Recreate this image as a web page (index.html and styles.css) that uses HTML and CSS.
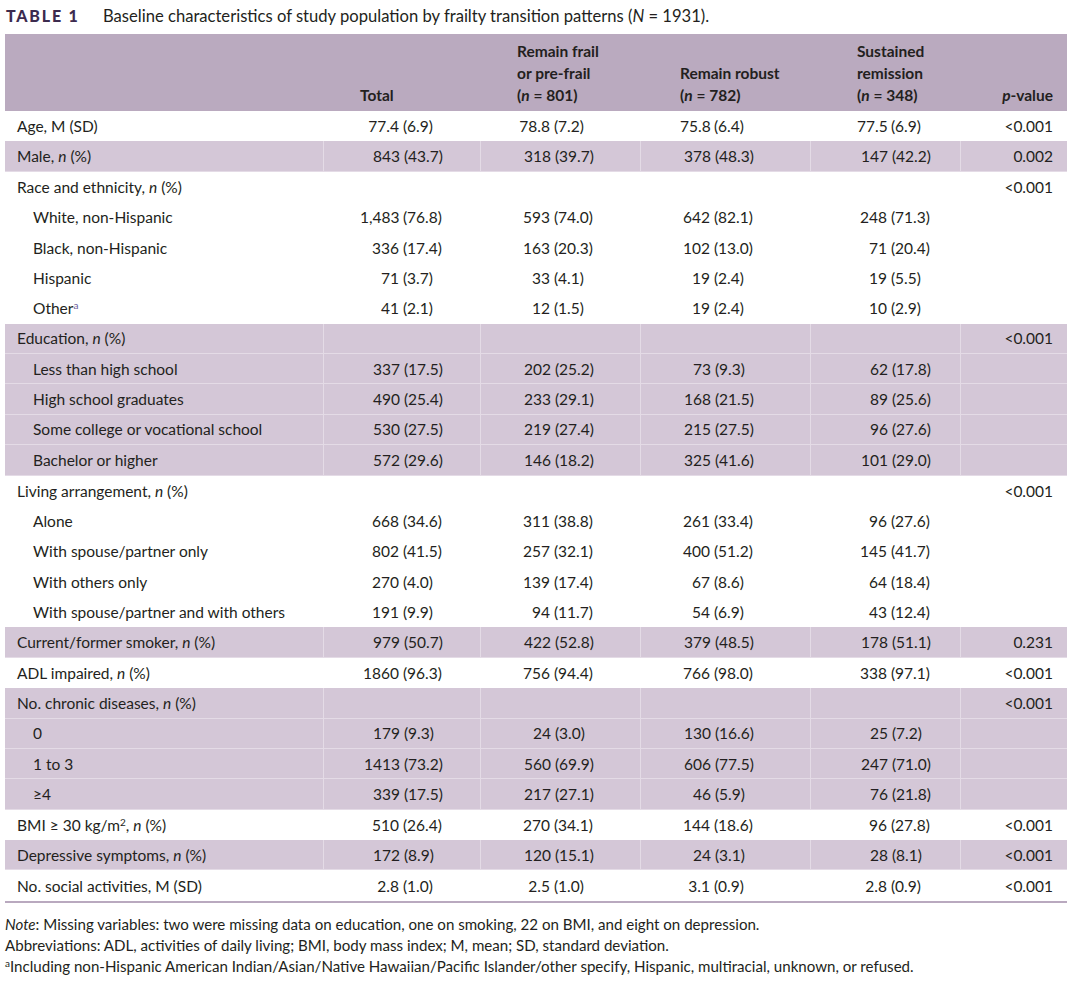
FILE: index.html
```html
<!DOCTYPE html>
<html lang="en">
<head>
<meta charset="utf-8">
<title>Table 1</title>
<link rel="stylesheet" href="styles.css">
</head>
<body>
<div class="wrap">
  <div class="caption"><span class="tlabel">TABLE 1</span><span class="ttext">Baseline characteristics of study population by frailty transition patterns (<i>N</i> = 1931).</span></div>
  <table class="tbl">
    <colgroup>
      <col class="w-label"><col class="w-total"><col class="w-frail"><col class="w-robust"><col class="w-sust"><col class="w-p">
    </colgroup>
    <thead>
      <tr>
        <th class="label"></th>
        <th class="c1">Total</th>
        <th class="c2">Remain frail<br>or pre-frail<br>(<i>n</i> = 801)</th>
        <th class="c3">Remain robust<br>(<i>n</i> = 782)</th>
        <th class="c4">Sustained<br>remission<br>(<i>n</i> = 348)</th>
        <th class="pv"><i>p</i>-value</th>
      </tr>
    </thead>
    <tbody>
      <tr><td class="label">Age, M (SD)</td><td class="c1"><span class="n">77.4</span> (6.9)</td><td class="c2"><span class="n">78.8</span> (7.2)</td><td class="c3"><span class="n">75.8</span> (6.4)</td><td class="c4"><span class="n">77.5</span> (6.9)</td><td class="pv">&lt;0.001</td></tr>
      <tr class="shade"><td class="label">Male, <i>n</i> (%)</td><td class="c1"><span class="n">843</span> (43.7)</td><td class="c2"><span class="n">318</span> (39.7)</td><td class="c3"><span class="n">378</span> (48.3)</td><td class="c4"><span class="n">147</span> (42.2)</td><td class="pv">0.002</td></tr>
      <tr><td class="label">Race and ethnicity, <i>n</i> (%)</td><td class="c1"></td><td class="c2"></td><td class="c3"></td><td class="c4"></td><td class="pv">&lt;0.001</td></tr>
      <tr><td class="label sub">White, non-Hispanic</td><td class="c1"><span class="n">1,483</span> (76.8)</td><td class="c2"><span class="n">593</span> (74.0)</td><td class="c3"><span class="n">642</span> (82.1)</td><td class="c4"><span class="n">248</span> (71.3)</td><td class="pv"></td></tr>
      <tr><td class="label sub">Black, non-Hispanic</td><td class="c1"><span class="n">336</span> (17.4)</td><td class="c2"><span class="n">163</span> (20.3)</td><td class="c3"><span class="n">102</span> (13.0)</td><td class="c4"><span class="n">71</span> (20.4)</td><td class="pv"></td></tr>
      <tr><td class="label sub">Hispanic</td><td class="c1"><span class="n">71</span> (3.7)</td><td class="c2"><span class="n">33</span> (4.1)</td><td class="c3"><span class="n">19</span> (2.4)</td><td class="c4"><span class="n">19</span> (5.5)</td><td class="pv"></td></tr>
      <tr><td class="label sub">Other<sup class="fn">a</sup></td><td class="c1"><span class="n">41</span> (2.1)</td><td class="c2"><span class="n">12</span> (1.5)</td><td class="c3"><span class="n">19</span> (2.4)</td><td class="c4"><span class="n">10</span> (2.9)</td><td class="pv"></td></tr>
      <tr class="shade"><td class="label">Education, <i>n</i> (%)</td><td class="c1"></td><td class="c2"></td><td class="c3"></td><td class="c4"></td><td class="pv">&lt;0.001</td></tr>
      <tr class="shade"><td class="label sub">Less than high school</td><td class="c1"><span class="n">337</span> (17.5)</td><td class="c2"><span class="n">202</span> (25.2)</td><td class="c3"><span class="n">73</span> (9.3)</td><td class="c4"><span class="n">62</span> (17.8)</td><td class="pv"></td></tr>
      <tr class="shade"><td class="label sub">High school graduates</td><td class="c1"><span class="n">490</span> (25.4)</td><td class="c2"><span class="n">233</span> (29.1)</td><td class="c3"><span class="n">168</span> (21.5)</td><td class="c4"><span class="n">89</span> (25.6)</td><td class="pv"></td></tr>
      <tr class="shade"><td class="label sub">Some college or vocational school</td><td class="c1"><span class="n">530</span> (27.5)</td><td class="c2"><span class="n">219</span> (27.4)</td><td class="c3"><span class="n">215</span> (27.5)</td><td class="c4"><span class="n">96</span> (27.6)</td><td class="pv"></td></tr>
      <tr class="shade"><td class="label sub">Bachelor or higher</td><td class="c1"><span class="n">572</span> (29.6)</td><td class="c2"><span class="n">146</span> (18.2)</td><td class="c3"><span class="n">325</span> (41.6)</td><td class="c4"><span class="n">101</span> (29.0)</td><td class="pv"></td></tr>
      <tr><td class="label">Living arrangement, <i>n</i> (%)</td><td class="c1"></td><td class="c2"></td><td class="c3"></td><td class="c4"></td><td class="pv">&lt;0.001</td></tr>
      <tr><td class="label sub">Alone</td><td class="c1"><span class="n">668</span> (34.6)</td><td class="c2"><span class="n">311</span> (38.8)</td><td class="c3"><span class="n">261</span> (33.4)</td><td class="c4"><span class="n">96</span> (27.6)</td><td class="pv"></td></tr>
      <tr><td class="label sub">With spouse/partner only</td><td class="c1"><span class="n">802</span> (41.5)</td><td class="c2"><span class="n">257</span> (32.1)</td><td class="c3"><span class="n">400</span> (51.2)</td><td class="c4"><span class="n">145</span> (41.7)</td><td class="pv"></td></tr>
      <tr><td class="label sub">With others only</td><td class="c1"><span class="n">270</span> (4.0)</td><td class="c2"><span class="n">139</span> (17.4)</td><td class="c3"><span class="n">67</span> (8.6)</td><td class="c4"><span class="n">64</span> (18.4)</td><td class="pv"></td></tr>
      <tr><td class="label sub">With spouse/partner and with others</td><td class="c1"><span class="n">191</span> (9.9)</td><td class="c2"><span class="n">94</span> (11.7)</td><td class="c3"><span class="n">54</span> (6.9)</td><td class="c4"><span class="n">43</span> (12.4)</td><td class="pv"></td></tr>
      <tr class="shade"><td class="label">Current/former smoker, <i>n</i> (%)</td><td class="c1"><span class="n">979</span> (50.7)</td><td class="c2"><span class="n">422</span> (52.8)</td><td class="c3"><span class="n">379</span> (48.5)</td><td class="c4"><span class="n">178</span> (51.1)</td><td class="pv">0.231</td></tr>
      <tr><td class="label">ADL impaired, <i>n</i> (%)</td><td class="c1"><span class="n">1860</span> (96.3)</td><td class="c2"><span class="n">756</span> (94.4)</td><td class="c3"><span class="n">766</span> (98.0)</td><td class="c4"><span class="n">338</span> (97.1)</td><td class="pv">&lt;0.001</td></tr>
      <tr class="shade"><td class="label">No. chronic diseases, <i>n</i> (%)</td><td class="c1"></td><td class="c2"></td><td class="c3"></td><td class="c4"></td><td class="pv">&lt;0.001</td></tr>
      <tr class="shade"><td class="label sub">0</td><td class="c1"><span class="n">179</span> (9.3)</td><td class="c2"><span class="n">24</span> (3.0)</td><td class="c3"><span class="n">130</span> (16.6)</td><td class="c4"><span class="n">25</span> (7.2)</td><td class="pv"></td></tr>
      <tr class="shade"><td class="label sub">1 to 3</td><td class="c1"><span class="n">1413</span> (73.2)</td><td class="c2"><span class="n">560</span> (69.9)</td><td class="c3"><span class="n">606</span> (77.5)</td><td class="c4"><span class="n">247</span> (71.0)</td><td class="pv"></td></tr>
      <tr class="shade"><td class="label sub">≥4</td><td class="c1"><span class="n">339</span> (17.5)</td><td class="c2"><span class="n">217</span> (27.1)</td><td class="c3"><span class="n">46</span> (5.9)</td><td class="c4"><span class="n">76</span> (21.8)</td><td class="pv"></td></tr>
      <tr><td class="label">BMI ≥ 30 kg/m<sup>2</sup>, <i>n</i> (%)</td><td class="c1"><span class="n">510</span> (26.4)</td><td class="c2"><span class="n">270</span> (34.1)</td><td class="c3"><span class="n">144</span> (18.6)</td><td class="c4"><span class="n">96</span> (27.8)</td><td class="pv">&lt;0.001</td></tr>
      <tr class="shade"><td class="label">Depressive symptoms, <i>n</i> (%)</td><td class="c1"><span class="n">172</span> (8.9)</td><td class="c2"><span class="n">120</span> (15.1)</td><td class="c3"><span class="n">24</span> (3.1)</td><td class="c4"><span class="n">28</span> (8.1)</td><td class="pv">&lt;0.001</td></tr>
      <tr><td class="label">No. social activities, M (SD)</td><td class="c1"><span class="n">2.8</span> (1.0)</td><td class="c2"><span class="n">2.5</span> (1.0)</td><td class="c3"><span class="n">3.1</span> (0.9)</td><td class="c4"><span class="n">2.8</span> (0.9)</td><td class="pv">&lt;0.001</td></tr>
    </tbody>
  </table>
  <div class="notes">
    <p><i>Note</i>: Missing variables: two were missing data on education, one on smoking, 22 on BMI, and eight on depression.</p>
    <p>Abbreviations: ADL, activities of daily living; BMI, body mass index; M, mean; SD, standard deviation.</p>
    <p><sup class="fn2">a</sup>Including non-Hispanic American Indian/Asian/Native Hawaiian/Pacific Islander/other specify, Hispanic, multiracial, unknown, or refused.</p>
  </div>
</div>
</body>
</html>
```

FILE: styles.css
```css
html, body {
  margin: 0;
  padding: 0;
  background: #ffffff;
}
body {
  font-family: Lato, "Open Sans", "Liberation Sans", sans-serif;
  color: #231f20;
  font-size: 15.5px;
}
.wrap {
  padding: 0 13px 0 5px;
}
.caption {
  display: flex;
  align-items: baseline;
  height: 34px;
  padding-top: 5px;
  box-sizing: border-box;
  line-height: 22px;
}
.tlabel {
  font-weight: 900;
  letter-spacing: 1.8px;
  color: #3c2b4f;
  font-size: 16px;
  margin-left: 1px;
  width: 97px;
}
.ttext {
  font-size: 16.6px;
}
.tbl {
  width: 1062px;
  border-collapse: separate;
  border-spacing: 0;
  table-layout: fixed;
  border-bottom: 2px solid #b9a9bf;
  font-size: 15.5px;
}
.w-label { width: 318px; }
.w-total { width: 157px; }
.w-frail { width: 160px; }
.w-robust { width: 170px; }
.w-sust { width: 150px; }
.w-p { width: 107px; }

thead th {
  background: #baaabf;
  font-weight: 700;
  text-align: left;
  vertical-align: bottom;
  line-height: 22px;
  padding: 6px 0 5px 0;
  height: 66px;
}
tbody td {
  height: 30.38px;
  box-sizing: border-box;
  padding: 0;
  vertical-align: middle;
  line-height: 20px;
  white-space: nowrap;
}
.label { padding-left: 12px; }
tbody td.sub { padding-left: 28px; }
.c1 { padding-left: 37px; }
.c2 { padding-left: 37px; }
.c3 { padding-left: 40px; }
.c4 { padding-left: 47px; }
th.pv, td.pv { text-align: right; padding-right: 14px; }

.n {
  display: inline-block;
  text-align: right;
}
.c1 .n { width: 39px; }
.c2 .n { width: 33px; }
.c3 .n { width: 30px; }
.c4 .n { width: 30px; }

tr.shade td {
  background: #d4c7d7;
  border-bottom: 1px solid #e4dbe6;
}
tr.shade td + td {
  border-left: 1px solid #e4dbe6;
}
sup {
  font-size: 10px;
  line-height: 0;
  vertical-align: 5px;
}
.fn { color: #6a5c9a; }
.notes {
  margin-top: 11px;
  font-size: 15.1px;
  line-height: 21px;
}
.notes p { margin: 0; }
.fn2 { font-size: 10px; vertical-align: 5px; }
```
